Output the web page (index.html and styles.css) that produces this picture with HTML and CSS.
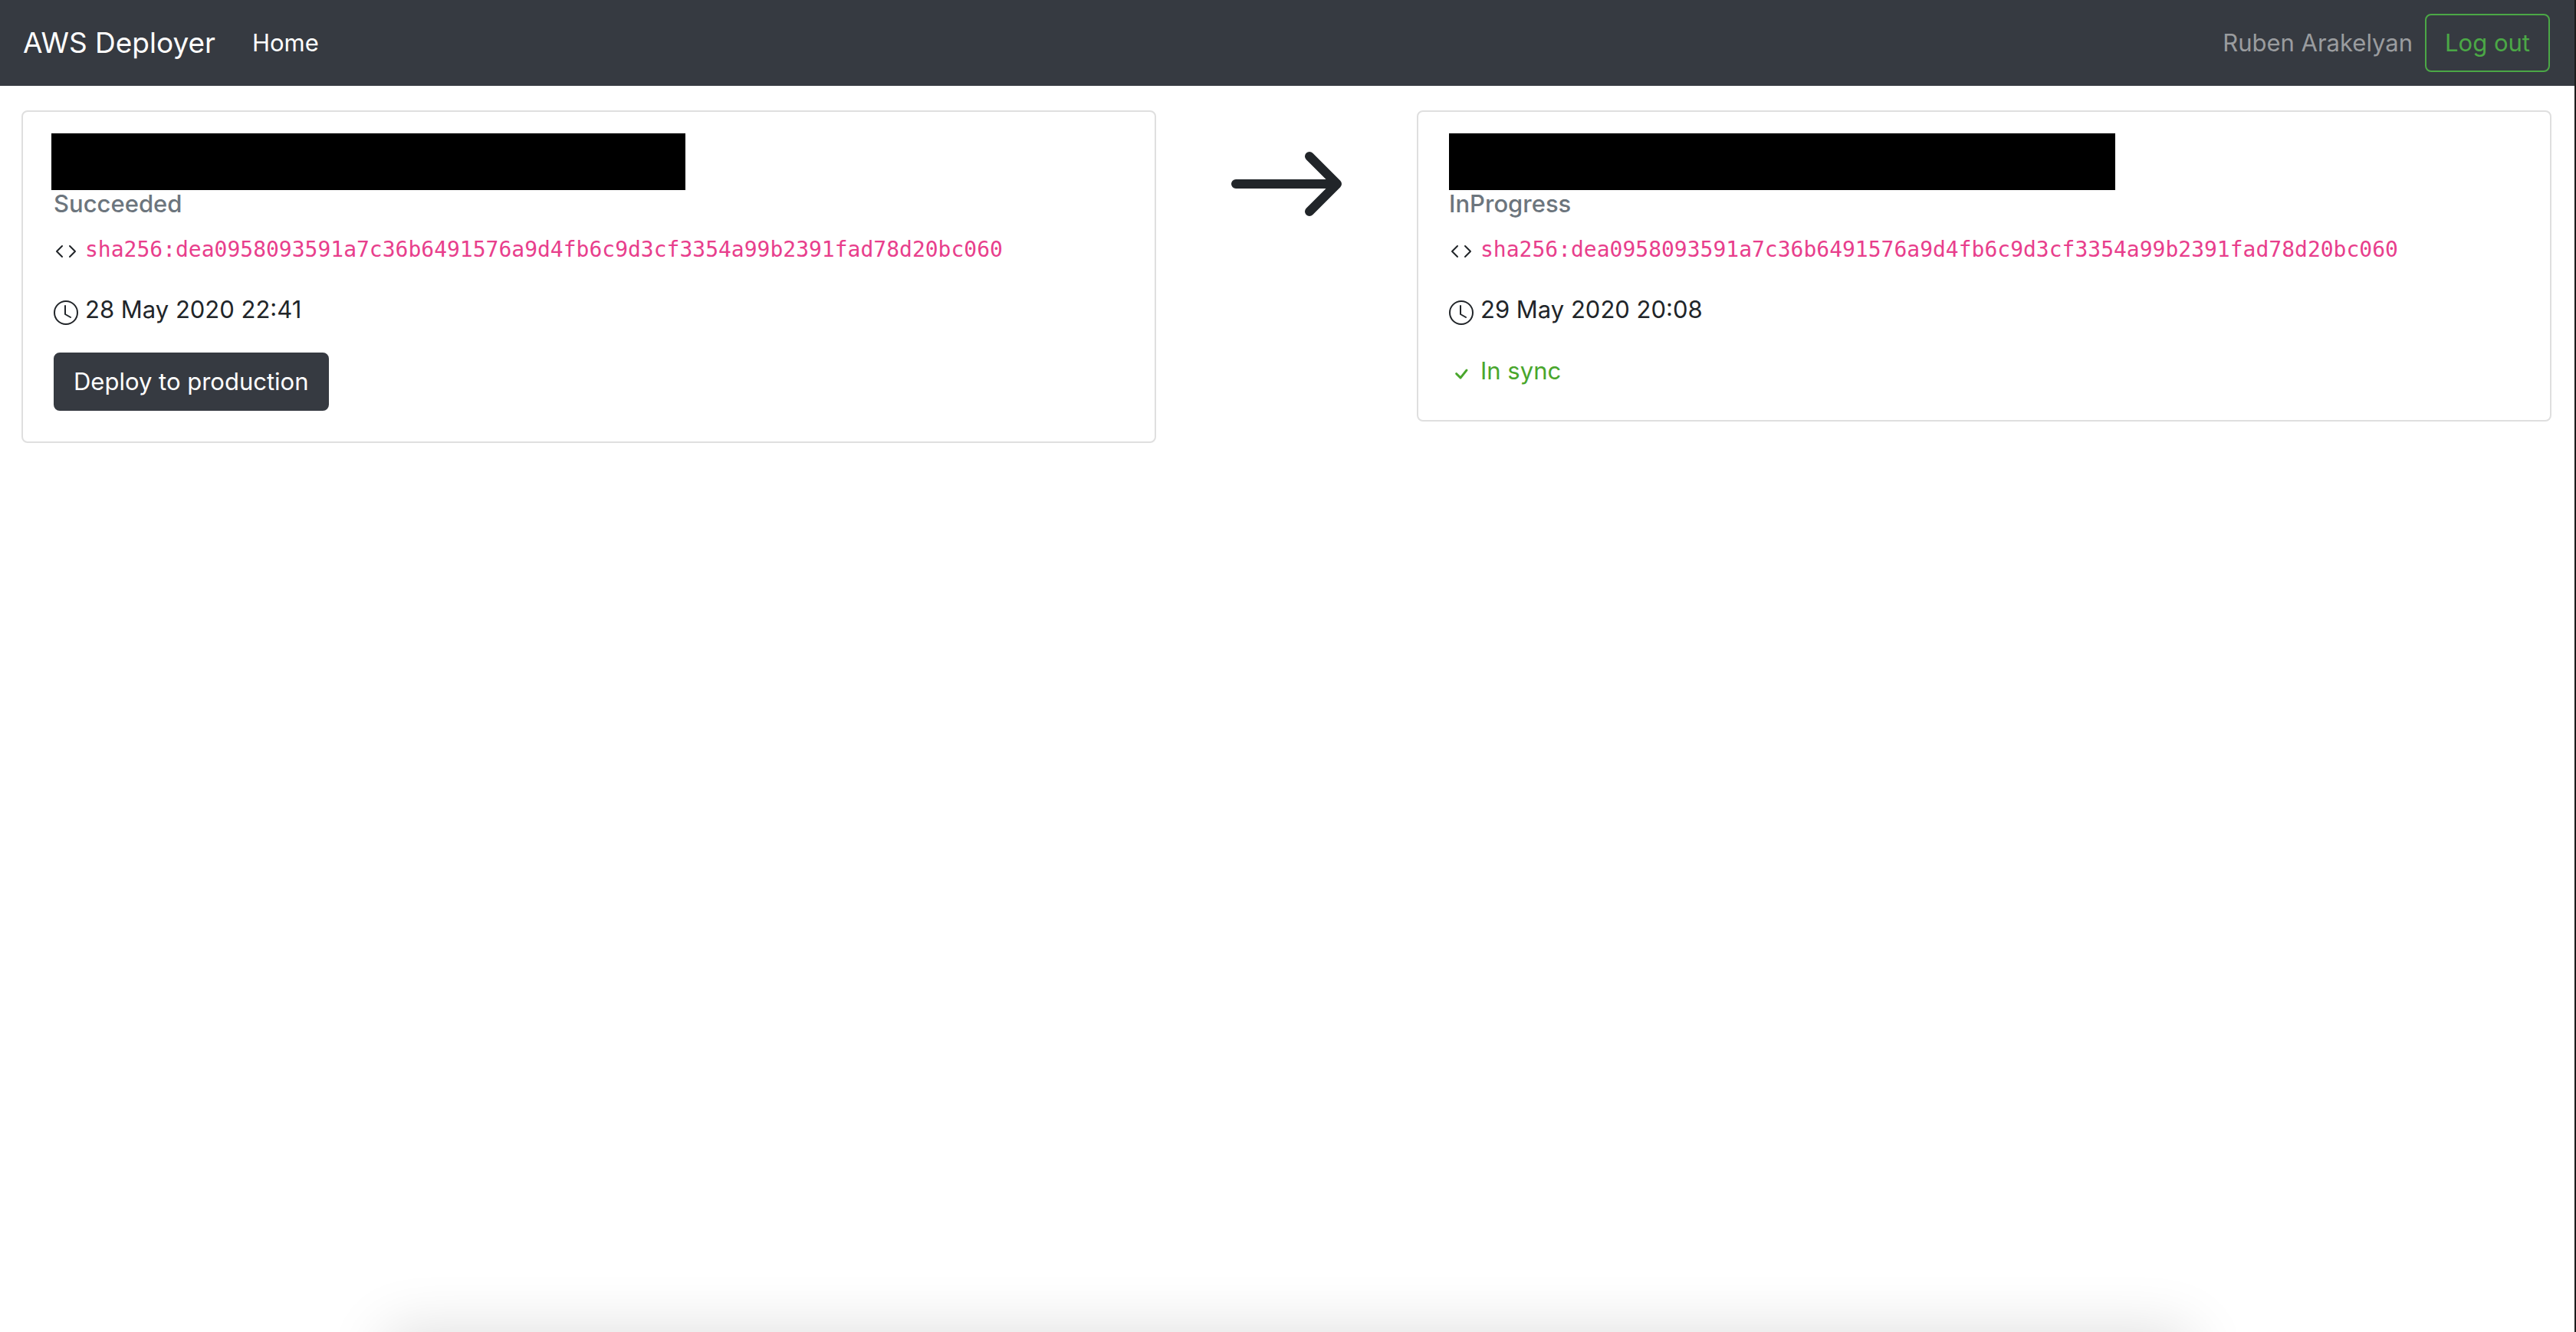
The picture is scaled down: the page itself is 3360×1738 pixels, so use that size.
FILE: index.html
```html
<!DOCTYPE html>
<html lang="en">
<head>
<meta charset="utf-8">
<meta name="viewport" content="width=device-width, initial-scale=1">
<title>AWS Deployer</title>
<link rel="stylesheet" href="styles.css">
</head>
<body>
<header class="navbar">
  <a class="brand" href="#">AWS Deployer</a>
  <nav class="nav">
    <a class="nav-link" href="#">Home</a>
  </nav>
  <span class="user">Ruben Arakelyan</span>
  <button class="btn btn-outline" type="button">Log out</button>
</header>

<main class="stages">
  <section class="card">
    <div class="redacted redacted-staging"></div>
    <h2 class="status">Succeeded</h2>
    <div class="details">
      <p class="detail">
        <svg class="icon" viewBox="0 0 16 16" aria-hidden="true"><path class="line" d="M5.5 4.5 2 8l3.5 3.5M10.5 4.5 14 8l-3.5 3.5"/></svg>
        <code>sha256:dea0958093591a7c36b6491576a9d4fb6c9d3cf3354a99b2391fad78d20bc060</code>
      </p>
      <p class="detail">
        <svg class="icon" viewBox="0 0 16 16" aria-hidden="true"><circle class="line" cx="8" cy="8" r="7.5"/><path class="line" d="M7.5 3.5V9l3.5 2"/></svg>
        <span>28 May 2020 22:41</span>
      </p>
      <button class="btn btn-dark" type="button">Deploy to production</button>
    </div>
  </section>

  <div class="flow">
    <svg class="arrow" viewBox="0 0 16 16" aria-hidden="true"><path class="line" d="M2.5 8h11M10.5 5l3 3-3 3"/></svg>
  </div>

  <section class="card">
    <div class="redacted redacted-production"></div>
    <h2 class="status">InProgress</h2>
    <div class="details">
      <p class="detail">
        <svg class="icon" viewBox="0 0 16 16" aria-hidden="true"><path class="line" d="M5.5 4.5 2 8l3.5 3.5M10.5 4.5 14 8l-3.5 3.5"/></svg>
        <code>sha256:dea0958093591a7c36b6491576a9d4fb6c9d3cf3354a99b2391fad78d20bc060</code>
      </p>
      <p class="detail">
        <svg class="icon" viewBox="0 0 16 16" aria-hidden="true"><circle class="line" cx="8" cy="8" r="7.5"/><path class="line" d="M7.5 3.5V9l3.5 2"/></svg>
        <span>29 May 2020 20:08</span>
      </p>
      <p class="detail synced">
        <svg class="icon" viewBox="0 0 16 16" aria-hidden="true"><path fill="currentColor" d="M10.97 4.97a.75.75 0 0 1 1.071 1.05l-3.992 4.99a.75.75 0 0 1-1.08.02L4.324 8.384a.75.75 0 1 1 1.06-1.06l2.094 2.093 3.473-4.425a.267.267 0 0 1 .02-.022z"/></svg>
        <span>In sync</span>
      </p>
    </div>
  </section>
</main>
<div class="window-shadow"></div>
</body>
</html>
```
FILE: styles.css
```css
* {
  box-sizing: border-box;
}

body {
  margin: 0;
  min-height: 100vh;
  border-right: 2px solid #1c1c1c;
  background: #fff;
  color: #212529;
  font-family: Inter, "Liberation Sans", sans-serif;
  font-size: 31px;
  line-height: 48px;
}

.navbar {
  display: flex;
  align-items: center;
  padding: 18px 32px 18px 30px;
  background: #363a41;
}

.brand {
  margin-right: 48px;
  color: #fff;
  font-size: 37px;
  text-decoration: none;
}

.nav {
  flex: 1;
}

.nav-link {
  color: #fff;
  text-decoration: none;
}

.user {
  margin-right: 16px;
  color: #9a9c9f;
}

.btn {
  padding: 12px 24px;
  border: 2px solid;
  border-radius: 8px;
  font: inherit;
}

.btn-outline {
  border-color: #4ba846;
  background: transparent;
  color: #4ba846;
}

.btn-dark {
  align-self: flex-start;
  border-color: #363a41;
  background: #363a41;
  color: #fff;
}

.stages {
  display: grid;
  grid-template-columns: 1fr 340px 1fr;
  align-items: start;
  padding: 32px 30px 32px 28px;
}

.card {
  padding: 28px 40px 40px;
  border: 2px solid #dfdfdf;
  border-radius: 8px;
}

.redacted {
  height: 74px;
  max-width: 100%;
  background: #000;
}

.redacted-staging {
  width: 827px;
  margin-left: -3px;
}

.redacted-production {
  width: 869px;
}

.status {
  margin: 0 0 16px;
  color: #6c757d;
  font-size: 31px;
  font-weight: 500;
  line-height: 36px;
}

.details {
  display: flex;
  flex-direction: column;
  gap: 32px;
}

.detail {
  display: flex;
  gap: 9px;
  margin: 0;
}

.icon {
  flex: none;
  width: 32px;
  height: 32px;
  margin-top: 12px;
}

.line {
  fill: none;
  stroke: currentColor;
  stroke-linecap: round;
  stroke-linejoin: round;
}

code {
  padding-top: 4px;
  color: #e83e8c;
  font-family: "DejaVu Sans Mono", monospace;
  font-size: 28px;
  line-height: 44px;
}

.synced {
  color: #49a62c;
}

.flow {
  display: flex;
  justify-content: center;
}

.arrow {
  width: 192px;
  height: 192px;
}

/* Shadow cast by a panel that sits just below the viewport */
.window-shadow {
  position: fixed;
  top: 100%;
  left: 15%;
  right: 15%;
  height: 200px;
  box-shadow: 0 0 80px rgba(0, 0, 0, 0.14);
}
```
